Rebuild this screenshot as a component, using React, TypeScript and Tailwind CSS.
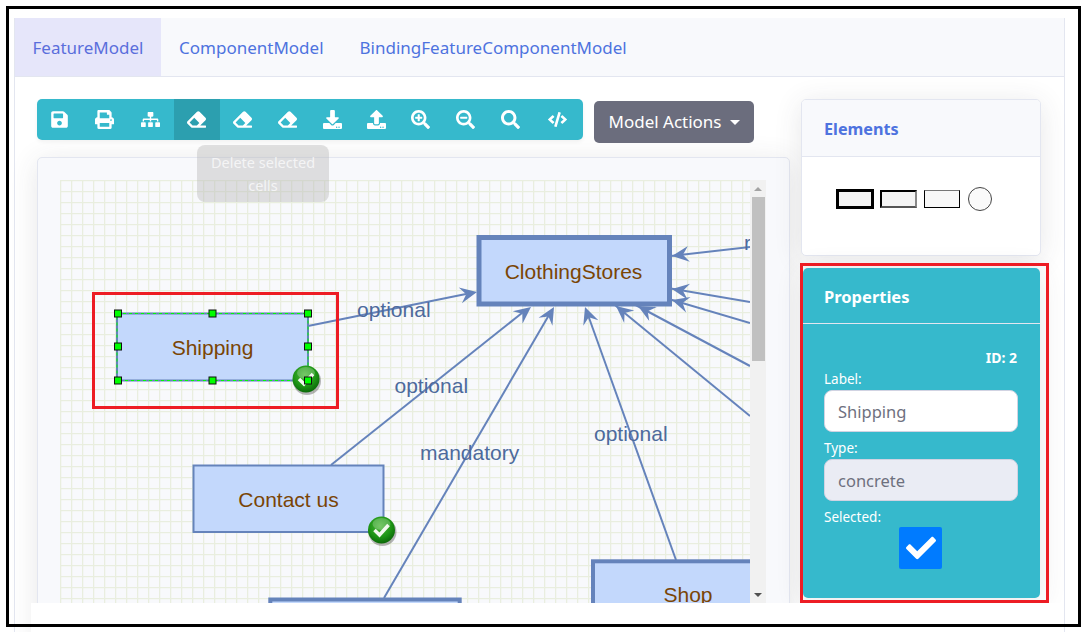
import {
  FaCheck,
  FaCode,
  FaDownload,
  FaEraser,
  FaPrint,
  FaSave,
  FaSearch,
  FaSearchMinus,
  FaSearchPlus,
  FaSitemap,
  FaUpload,
} from "react-icons/fa";

const tools = [
  { icon: FaSave, width: "w-[44.6px]" },
  { icon: FaPrint, width: "w-[45px]" },
  { icon: FaSitemap, width: "w-[47.4px]" },
  { icon: FaEraser, width: "w-[46px]", active: true },
  { icon: FaEraser, width: "w-[45px]" },
  { icon: FaEraser, width: "w-[45px]" },
  { icon: FaDownload, width: "w-[45px]" },
  { icon: FaUpload, width: "w-[44px]" },
  { icon: FaSearchPlus, width: "w-[44px]" },
  { icon: FaSearchMinus, width: "w-[46px]" },
  { icon: FaSearch, width: "w-[44px]" },
  { icon: FaCode, width: "w-[50px]" },
];

const edges = [
  "M308 326 L466 294",
  "M331 465 L522 313",
  "M384 598 L549 315",
  "M676 560 L588 315",
  "M750 247 L662 257",
  "M750 302 L662 287",
  "M750 323 L662 297",
  "M750 366 L630 302",
  "M750 416 L610 301",
];

const heads: [number, number, number][] = [
  [477, 292, -11.4],
  [531, 307, -38],
  [554, 307, -60],
  [585, 307, -110],
  [672, 256, 173],
  [672, 289, 189],
  [672, 300, 196],
  [638, 306, 208],
  [616, 306, 219],
];

const STROKE = "#6583bb";

function Arrow({ x, y, angle }: { x: number; y: number; angle: number }) {
  return (
    <path
      d="M0 0 L-17 -8 L-11 0 L-17 8 Z"
      transform={`translate(${x} ${y}) rotate(${angle})`}
      fill={STROKE}
    />
  );
}

function Node({
  x,
  y,
  w,
  h,
  label,
  sw,
  ty,
  cx,
}: {
  x: number;
  y: number;
  w: number;
  h: number;
  label: string;
  sw: number;
  ty?: number;
  cx?: number;
}) {
  return (
    <g>
      <rect x={x} y={y} width={w} height={h} fill="#c3d8fc" stroke={STROKE} strokeWidth={sw} />
      <text
        x={cx ?? x + w / 2}
        y={ty ?? y + h / 2 + 7}
        textAnchor="middle"
        fontSize={21}
        fill="#7a4505"
        fontFamily="Liberation Sans, Arial, sans-serif"
      >
        {label}
      </text>
    </g>
  );
}

function EdgeLabel({ x, y, children }: { x: number; y: number; children: string }) {
  return (
    <text x={x} y={y} fontSize={21} fill="#4d6a9c" fontFamily="Liberation Sans, Arial, sans-serif">
      {children}
    </text>
  );
}

function Badge({ x, y }: { x: number; y: number }) {
  return (
    <g>
      <circle cx={x + 1} cy={y + 2} r={14} fill="#000" opacity="0.28" />
      <circle cx={x} cy={y} r={13.5} fill="url(#badge)" />
      <ellipse cx={x} cy={y - 6} rx={9} ry={6} fill="#fff" opacity="0.22" />
      <path
        d="M-7 0 L-2 5 L7 -5"
        transform={`translate(${x} ${y})`}
        fill="none"
        stroke="#f2f8ee"
        strokeWidth={3.5}
      />
    </g>
  );
}

function Handle({ x, y }: { x: number; y: number }) {
  return <rect x={x - 3.5} y={y - 3.5} width={7} height={7} fill="#00ff00" stroke="#111" strokeWidth={1} />;
}

// mxGraph canvas, drawn with page coordinates offset by the svg position
function Diagram() {
  return (
    <svg width={690} height={423} viewBox="60 180 690 423" className="block">
      <defs>
        <pattern id="grid" x="60" y="180" width="11" height="11" patternUnits="userSpaceOnUse">
          <path d="M11 0 L0 0 L0 11" fill="none" stroke="#e9eedf" strokeWidth="2.6" />
        </pattern>
        <radialGradient id="badge" cx="45%" cy="35%" r="70%">
          <stop offset="0%" stopColor="#4fb83c" />
          <stop offset="60%" stopColor="#1c9414" />
          <stop offset="100%" stopColor="#075f07" />
        </radialGradient>
      </defs>
      <rect x="60" y="180" width="690" height="423" fill="url(#grid)" />

      {edges.map((d) => (
        <path key={d} d={d} stroke={STROKE} strokeWidth={2} fill="none" />
      ))}
      {heads.map(([x, y, a]) => (
        <Arrow key={`${x}-${y}`} x={x} y={y} angle={a} />
      ))}

      <EdgeLabel x={357} y={317}>optional</EdgeLabel>
      <EdgeLabel x={394.5} y={393}>optional</EdgeLabel>
      <EdgeLabel x={420} y={460}>mandatory</EdgeLabel>
      <EdgeLabel x={594} y={441}>optional</EdgeLabel>
      <EdgeLabel x={744} y={250}>r</EdgeLabel>

      <Node x={479} y={237.5} w={190.5} h={66.5} label="ClothingStores" sw={5} ty={279} cx={573.5} />
      <Node x={117} y={313.5} w={191} h={67} label="Shipping" sw={2} ty={355} cx={212.5} />
      <Node x={193.5} y={465.5} w={190} h={66.5} label="Contact us" sw={2} ty={507} cx={288.5} />
      <Node x={270.3} y={599.5} w={189.4} h={66} label="" sw={4} />
      <Node x={593} y={561.3} w={191} h={66} label="Shop" sw={4} ty={602} cx={688} />

      <rect x={117} y={313.5} width={191} height={67} fill="none" stroke="#00ff00" strokeDasharray="3 3" />
      <Badge x={306} y={379} />
      <Badge x={381.5} y={530} />
      <Handle x={118} y={313.5} />
      <Handle x={212.5} y={313.5} />
      <Handle x={308} y={313.5} />
      <Handle x={118} y={346.5} />
      <Handle x={308} y={346.5} />
      <Handle x={118} y={380.5} />
      <Handle x={212.5} y={380.5} />
      <Handle x={308} y={380.5} />
    </svg>
  );
}

function Scrollbar() {
  return (
    <div className="w-[16px] h-[423px] bg-[#f1f1f1] flex flex-col items-center">
      <div className="h-[17px] flex items-center justify-center">
        <div className="w-0 h-0 border-x-[4px] border-x-transparent border-b-[4px] border-b-[#a3a3a3]" />
      </div>
      <div className="w-[13px] h-[164px] bg-[#c0c0c0]" />
      <div className="flex-1" />
      <div className="h-[17px] flex items-center justify-center">
        <div className="w-0 h-0 border-x-[4px] border-x-transparent border-t-[4px] border-t-[#505050]" />
      </div>
    </div>
  );
}

function Field({ label, value, disabled }: { label: string; value: string; disabled?: boolean }) {
  return (
    <div>
      <div className="text-[13.5px] leading-[18px] text-white">{label}</div>
      <div
        className={`mt-[2px] h-[42px] w-[194px] rounded-[8px] border border-[#d1d3e2] px-[13px] pt-[2px] flex items-center text-[16.5px] text-[#6e707e] ${
          disabled ? "bg-[#eaecf4]" : "bg-white"
        }`}
      >
        {value}
      </div>
    </div>
  );
}

export default function App() {
  return (
    <div className="relative w-[1088px] h-[632px] overflow-hidden bg-white font-['Noto_Sans',sans-serif]">
      <div className="pl-[14px] pt-[18px]">
        <div className="w-[1051px] h-[640px] border-x border-[#e3e6f0] bg-white">
          <div className="h-[59px] bg-[#f8f9fc] border-b border-[#e3e6f0] flex text-[17px] text-[#4e73df]">
            <div className="w-[146px] bg-[#e6e6fa] flex items-center justify-center pt-[1px] text-[#5a6edc]">FeatureModel</div>
            <div className="ml-[18px] pt-[1px] flex items-center">ComponentModel</div>
            <div className="ml-[36px] pt-[1px] flex items-center">BindingFeatureComponentModel</div>
          </div>

          <div className="flex pl-[22px] pt-[22px]">
            <div className="w-[753px]">
              <div className="flex items-start h-[58px]">
                <div className="flex h-[41px] w-[546px] rounded-[5px] bg-[#36b9cc] overflow-hidden shadow-[0_2px_4px_rgba(0,0,0,0.05)]">
                  {tools.map(({ icon: Icon, width, active }, i) => (
                    <div
                      key={i}
                      className={`${width} flex items-center justify-center text-white text-[19px] ${
                        active ? "bg-[#2c9faf]" : ""
                      }`}
                    >
                      <Icon />
                    </div>
                  ))}
                </div>
                <div className="ml-[11px] mt-[2px] h-[42px] w-[160px] rounded-[5px] bg-[#6b6d7d] text-white text-[17px] flex items-center justify-center gap-[8px]">
                  Model Actions
                  <span className="w-0 h-0 border-x-[5px] border-x-transparent border-t-[5px] border-t-white" />
                </div>
              </div>

              <div className="w-[753px] h-[500px] rounded-[5px] border border-[#e3e6f0] bg-[#f8f9fc] pl-[22px] pt-[22px] shadow-[0_4px_28px_rgba(58,59,69,0.12)] flex items-start">
                <Diagram />
                <Scrollbar />
              </div>
            </div>

            <div className="ml-[11px] w-[240px]">
              <div className="h-[157px] rounded-[5px] border border-[#e3e6f0] bg-white shadow-[0_4px_28px_rgba(58,59,69,0.12)] overflow-hidden">
                <div className="h-[57px] bg-[#f8f9fc] border-b border-[#e3e6f0] pl-[22px] pt-[3px] flex items-center text-[16.2px] font-bold text-[#4e73df]">
                  Elements
                </div>
                <div className="flex items-center pl-[34px] pt-[30px]">
                  <div className="w-[38px] h-[20px] border-[3px] border-black bg-[#f4f4f4]" />
                  <div className="ml-[6px] w-[37px] h-[18px] border-2 border-black border-r-[#888] border-b-[#555] bg-[#f4f4f4]" />
                  <div className="ml-[7px] w-[36px] h-[18px] border border-black border-t-[#777] bg-[#f8f8f8]" />
                  <div className="ml-[8px] w-[24px] h-[24px] rounded-full border-[1.5px] border-[#444] bg-[#fafafa]" />
                </div>
              </div>
              <div className="ml-[2px] mt-[12px] w-[237px] h-[330px] rounded-[5px] bg-[#36b9cc] shadow-[0_4px_28px_rgba(58,59,69,0.12)]">
                <div className="h-[56px] border-b border-[#e3e6f0] pl-[21px] pt-[3px] flex items-center text-[16.5px] font-bold text-white">
                  Properties
                </div>
                <div className="px-[21px] pt-[25px]">
                  <div className="text-right pr-[2px] text-[14px] font-bold leading-[18px] text-white">ID: 2</div>
                  <div className="h-[3px]" />
                  <Field label="Label:" value="Shipping" />
                  <div className="h-[7px]" />
                  <Field label="Type:" value="concrete" disabled />
                  <div className="mt-[7px] text-[13.5px] leading-[18px] text-white">Selected:</div>
                  <div className="mt-[1px] ml-[75px] w-[43px] h-[42px] bg-[#007bff] rounded-[2px] flex items-center justify-center text-white text-[30px]">
                    <FaCheck />
                  </div>
                </div>
              </div>
            </div>
          </div>
        </div>
      </div>

      {/* overlays: tooltip, highlight boxes, page strip, screenshot frame */}
      <div className="absolute left-[197px] top-[145px] w-[132px] h-[57px] rounded-[8px] bg-[#b4b4b4]/40 text-white/70 text-[14.5px] leading-[23px] text-center pt-[6px]">
        Delete selected cells
      </div>
      <div className="absolute left-[92px] top-[292px] w-[247px] h-[117px] border-[3px] border-[#ed1c24]" />
      <div className="absolute left-[31px] top-[603px] w-[1033px] h-[29px] bg-white" />
      <div className="absolute left-[800px] top-[263px] w-[249px] h-[340px] border-[3px] border-[#ed1c24]" />
      <div className="absolute left-[6px] top-[6px] w-[1075px] h-[621px] border-[3px] border-black" />
    </div>
  );
}
